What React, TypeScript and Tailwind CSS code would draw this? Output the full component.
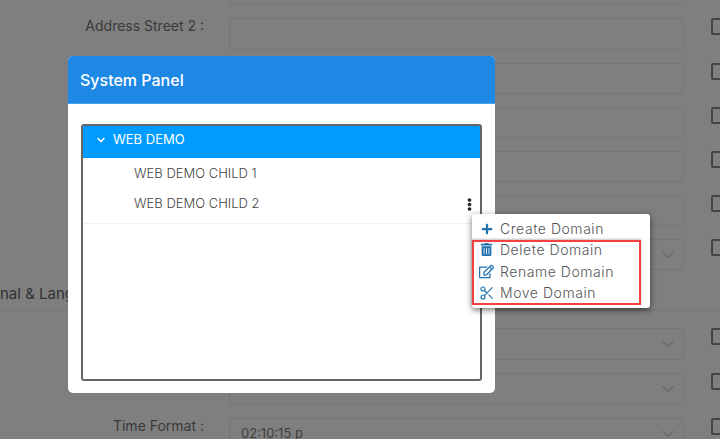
import { ChevronDown, Scissors } from "lucide-react";
import { FaPlus, FaTrashAlt, FaRegEdit, FaEllipsisV } from "react-icons/fa";

const font = { fontFamily: "Inter, 'Noto Sans', sans-serif" };

function Row({ label, value, select, h = "h-[31px]" }: { label?: string; value?: string; select?: boolean; h?: string }) {
  return (
    <div className="flex items-start">
      <div className="w-[204px] h-[16px] leading-[16px] shrink-0 text-right text-[14px] text-[#3a3a3a] whitespace-nowrap">{label}</div>
      <div className={`ml-[25px] w-[455px] ${h} shrink-0 rounded-[4px] border border-[#757575] flex items-center justify-between pl-[11px] pr-[5px] text-[13px] text-[#3f3f3f]`}>
        <span>{value}</span>
        {select && <ChevronDown className="text-[#686868]" size={20} strokeWidth={1.4} />}
      </div>
      <div className="ml-[27px] w-[17px] h-[17px] shrink-0 rounded-[2px] border-2 border-[#444]" />
    </div>
  );
}

function MenuItem({ icon, label, h }: { icon: React.ReactNode; label: string; h: string }) {
  return (
    <div className={`flex items-center ${h}`}>
      <div className="w-[28px] pl-px flex justify-center text-[#2272b0]">{icon}</div>
      <span className="text-[14px] font-light text-[#555] tracking-[0.55px] whitespace-nowrap">{label}</span>
    </div>
  );
}

export default function App() {
  return (
    <div className="relative h-[439px] w-[720px] overflow-hidden bg-[#7f7f7f]" style={font}>
      <div className="-mt-[26px] flex flex-col">
        <div className="flex flex-col gap-[13px]">
          <Row />
          <Row label="Address Street 2 :" h="h-[32px]" />
          <Row />
          <Row />
          <Row label="Address" />
          <Row />
          <Row select />
        </div>
        <div className="mt-[13px] h-[27px] text-[15px] text-[#333] -ml-[40px] whitespace-nowrap leading-[22px]">Regional &amp; Language</div>
        <div className="h-px bg-[#767676]" />
        <div className="mt-[17px] flex flex-col gap-[13px]">
          <Row select h="h-[32px]" />
          <Row select value="MM-DD-YYYY" h="h-[32px]" />
          <Row select label="Time Format :" value="02:10:15 p" h="h-[32px]" />
        </div>
      </div>

      {/* Modal */}
      <div className="absolute left-[68px] top-[56px] flex h-[337px] w-[427px] flex-col overflow-hidden rounded-[5px] bg-white">
        <div className="flex h-[48px] items-center bg-[#1e88e5] pl-[12px] text-[16px] font-medium text-white border-b border-[#4aa3ee]">System Panel</div>
        <div className="flex-1 px-[13px] pt-[20px] pb-[12px]">
          <div className="h-full rounded-[3px] border-2 border-[#666] overflow-hidden">
            <div className="flex h-[32px] items-center bg-[#009bff] pl-[12px] pb-[4px] text-[13px] text-white">
              <ChevronDown size={12} strokeWidth={3} />
              <span className="ml-[6px]">WEB DEMO</span>
            </div>
            <div className="flex h-[31px] items-center pl-[51px] text-[13px] font-light text-[#444]">WEB DEMO CHILD 1</div>
            <div className="flex h-[35px] items-center justify-between pl-[51px] pr-[10px] pb-[4px] text-[13px] font-light text-[#444] border-b border-[#ebf3fa]">
              <span>WEB DEMO CHILD 2</span>
              <FaEllipsisV size={13} className="text-[#222] translate-x-[6px]" />
            </div>
          </div>
        </div>
      </div>

      {/* Context menu */}
      <div className="absolute left-[472px] top-[214px] w-[178px] h-[94px] rounded-[3px] bg-white pt-[4px] shadow-[0_2px_6px_rgba(0,0,0,0.55)]">
        <MenuItem h="h-[21px]" icon={<FaPlus size={12} />} label="Create Domain" />
        <MenuItem h="h-[21px]" icon={<FaTrashAlt size={13} />} label="Delete Domain" />
        <MenuItem h="h-[22px]" icon={<FaRegEdit size={15} />} label="Rename Domain" />
        <MenuItem h="h-[21px]" icon={<Scissors size={16} strokeWidth={1.75} />} label="Move Domain" />
        <div className="absolute left-0 top-[26px] h-[65px] w-[169px] border-2 border-[#f44040] shadow-[0_-1px_2px_rgba(0,0,0,0.25)]" />
      </div>
    </div>
  );
}
